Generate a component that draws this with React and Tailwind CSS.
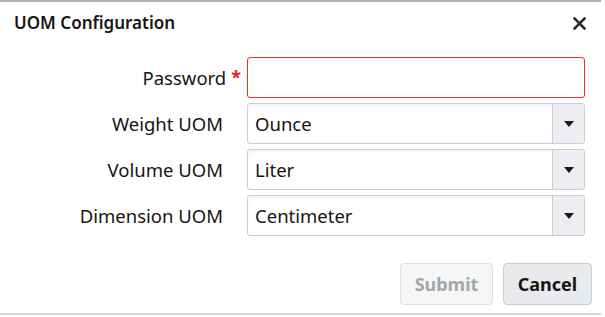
import React from "react";

const font = { fontFamily: '"Noto Sans", "Open Sans", Arial, sans-serif' };

function Caret() {
  return (
    <svg width="10" height="6" viewBox="0 0 10 6">
      <path d="M0 0 H10 L5 6 Z" fill="#1a1a1a" />
    </svg>
  );
}

function SelectBox({ value }) {
  return (
    <div className="flex h-[41px] w-[338px] rounded-[3px] border border-[#c9cfd6] bg-white shadow-[inset_0_2px_3px_rgba(0,0,0,0.05)] overflow-hidden">
      <div className="flex flex-1 items-center pl-[7px] text-[18.5px] text-[#161513]">{value}</div>
      <div className="flex w-[32px] items-center justify-center border-l border-[#c9cfd6] bg-[#eceef1]">
        <Caret />
      </div>
    </div>
  );
}

function Row({ label, required, children }) {
  return (
    <div className="flex items-center">
      <div className="flex w-[241px] items-center justify-end text-[18.5px] text-[#161513]">
        <span className={required ? "" : "pr-[18px]"}>{label}</span>
        {required && <span className="ml-[5px] text-[18px] font-bold text-[#e0261f]">*</span>}
      </div>
      <div className="ml-[6px]">{children}</div>
    </div>
  );
}

export default function App() {
  return (
    <div className="h-[317px] w-[605px] bg-white" style={font}>
      <div className="flex h-[315px] w-[601px] flex-col border-t-2 border-b-2 border-t-[#b4b4b4] border-b-[#d6d6d6]">
        <div className="flex h-[42px] items-center justify-between pl-[14px] pr-[15px]">
          <div className="text-[17px] font-semibold text-[#161513]">UOM Configuration</div>
          <svg width="13" height="13" viewBox="0 0 13 13">
            <path d="M1.5 1.5 L11.5 11.5 M11.5 1.5 L1.5 11.5" stroke="#2b2b2b" strokeWidth="2.6" strokeLinecap="square" />
          </svg>
        </div>
        <div className="mt-[13px] flex flex-col gap-[5px]">
          <Row label="Password" required>
            <div className="h-[41px] w-[338px] rounded-[3px] border-[1.5px] border-[#f03030] bg-white shadow-[inset_0_2px_3px_rgba(0,0,0,0.05)]" />
          </Row>
          <Row label="Weight UOM">
            <SelectBox value="Ounce" />
          </Row>
          <Row label="Volume UOM">
            <SelectBox value="Liter" />
          </Row>
          <Row label="Dimension UOM">
            <SelectBox value="Centimeter" />
          </Row>
        </div>
        <div className="mt-auto mb-[8px] flex justify-end gap-[10px] pr-[9px]">
          <button className="h-[42px] w-[93px] rounded-[4px] border border-[#dcdfe3] bg-[#f5f6f7] text-[18px] font-bold text-[#a3a6a8]">
            Submit
          </button>
          <button className="h-[42px] w-[89px] rounded-[4px] border border-[#c9ced4] bg-[#e8eaed] text-[18px] font-bold text-[#161513]">
            Cancel
          </button>
        </div>
      </div>
    </div>
  );
}
